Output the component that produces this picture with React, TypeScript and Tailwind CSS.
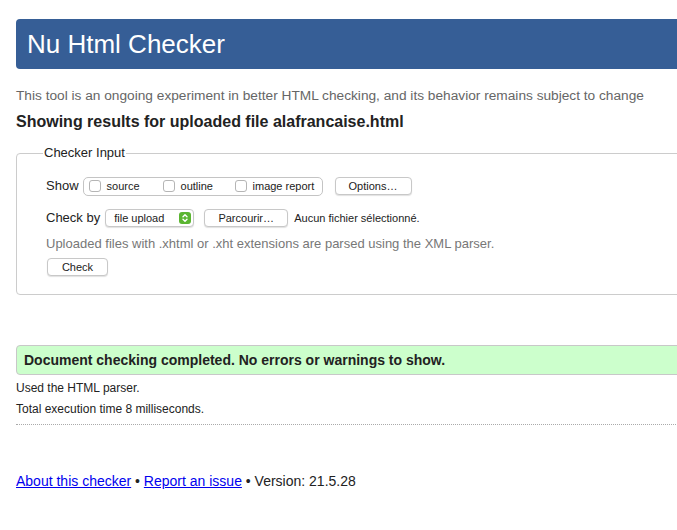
import React from 'react';

const FONT = { fontFamily: '"Liberation Sans", Arial, sans-serif' };

function Checkbox({ label }: { label: string }) {
  return (
    <label className="flex items-center gap-[6px] text-[11px] text-[#222]">
      <span className="w-[12px] h-[12px] rounded-[3px] border border-[#b5b5b5] bg-white" />
      {label}
    </label>
  );
}

function MacButton({ children, className = '' }: { children: React.ReactNode; className?: string }) {
  return (
    <button
      className={`h-[18px] rounded-[4px] border border-[#c8c8c8] bg-white text-[11px] text-[#222] shadow-[0_1px_1px_rgba(0,0,0,0.12)] leading-none ${className}`}
    >
      {children}
    </button>
  );
}

export default function App() {
  return (
    <div className="w-full overflow-hidden bg-white text-[#222]" style={FONT}>
      <div className="ml-4 w-[720px] pb-10">
        {/* Header */}
        <div className="mt-[19px] h-[50px] rounded-[4px] bg-[#365e96] flex items-center pl-[11px]">
          <h1 className="text-[26px] text-white leading-none">Nu Html Checker</h1>
        </div>

        <p className="mt-[19px] text-[13.7px] leading-[16px] text-[#666]">
          This tool is an ongoing experiment in better HTML checking, and its behavior remains subject to change
        </p>
        <h2 className="mt-[8px] text-[16px] leading-[20px] font-bold">
          Showing results for uploaded file alafrancaise.html
        </h2>

        {/* Checker input */}
        <fieldset className="mt-[13px] border border-[#cccccc] rounded-[4px] pl-[29px] pt-[15px] pb-[18px]">
          <legend className="-ml-[3px] px-[1px] text-[13px] leading-[16px]">Checker Input</legend>

          <div className="flex items-center h-[20px]">
            <span className="text-[13px] mr-[4px]">Show</span>
            <div className="flex items-center h-[19px] w-[240px] rounded-[5px] border border-[#c4c4c4] pl-[5px]">
              <div className="w-[74px]"><Checkbox label="source" /></div>
              <div className="w-[72px]"><Checkbox label="outline" /></div>
              <Checkbox label="image report" />
            </div>
            <MacButton className="ml-[12px] w-[77px]">Options…</MacButton>
          </div>

          <div className="flex items-center h-[20px] mt-[12px]">
            <span className="text-[13px] mr-[5px]">Check by</span>
            <div className="flex items-center justify-between h-[18px] w-[89px] rounded-[4px] border border-[#c8c8c8] bg-white shadow-[0_1px_1px_rgba(0,0,0,0.12)] pl-[8px] pr-[2px]">
              <span className="text-[11px]">file upload</span>
              <span className="w-[12px] h-[12px] rounded-[3px] bg-[#5bb531] flex items-center justify-center">
                <svg width="8" height="10" viewBox="0 0 8 10" fill="none" stroke="white" strokeWidth="1.4" strokeLinecap="round" strokeLinejoin="round">
                  <path d="M2 3.8 L4 1.8 L6 3.8" />
                  <path d="M2 6.2 L4 8.2 L6 6.2" />
                </svg>
              </span>
            </div>
            <MacButton className="ml-[10px] w-[84px]">Parcourir…</MacButton>
            <span className="ml-[6px] text-[11px]">Aucun fichier sélectionné.</span>
          </div>

          <p className="mt-[8px] text-[13px] leading-[16px] text-[#777]">
            Uploaded files with .xhtml or .xht extensions are parsed using the XML parser.
          </p>
          <MacButton className="mt-[6px] ml-[1px] w-[61px] block">Check</MacButton>
        </fieldset>

        {/* Result */}
        <div className="mt-[50px] h-[30px] rounded-l-[4px] border border-[#c8c8c8] bg-[#ccffcc] flex items-center pl-[7px]">
          <span className="text-[14px] font-bold">Document checking completed. No errors or warnings to show.</span>
        </div>
        <p className="mt-[6px] text-[12px] leading-[15px]">Used the HTML parser.</p>
        <p className="mt-[6px] text-[12px] leading-[15px]">Total execution time 8 milliseconds.</p>
        <div className="mt-[7px] border-t border-dotted border-[#aaaaaa]" />

        {/* Footer */}
        <p className="mt-[48px] text-[14px] leading-[17px]">
          <a href="#" className="text-[#0000ee] underline">About this checker</a>
          {' • '}
          <a href="#" className="text-[#0000ee] underline">Report an issue</a>
          {' • Version: 21.5.28'}
        </p>
      </div>
    </div>
  );
}
